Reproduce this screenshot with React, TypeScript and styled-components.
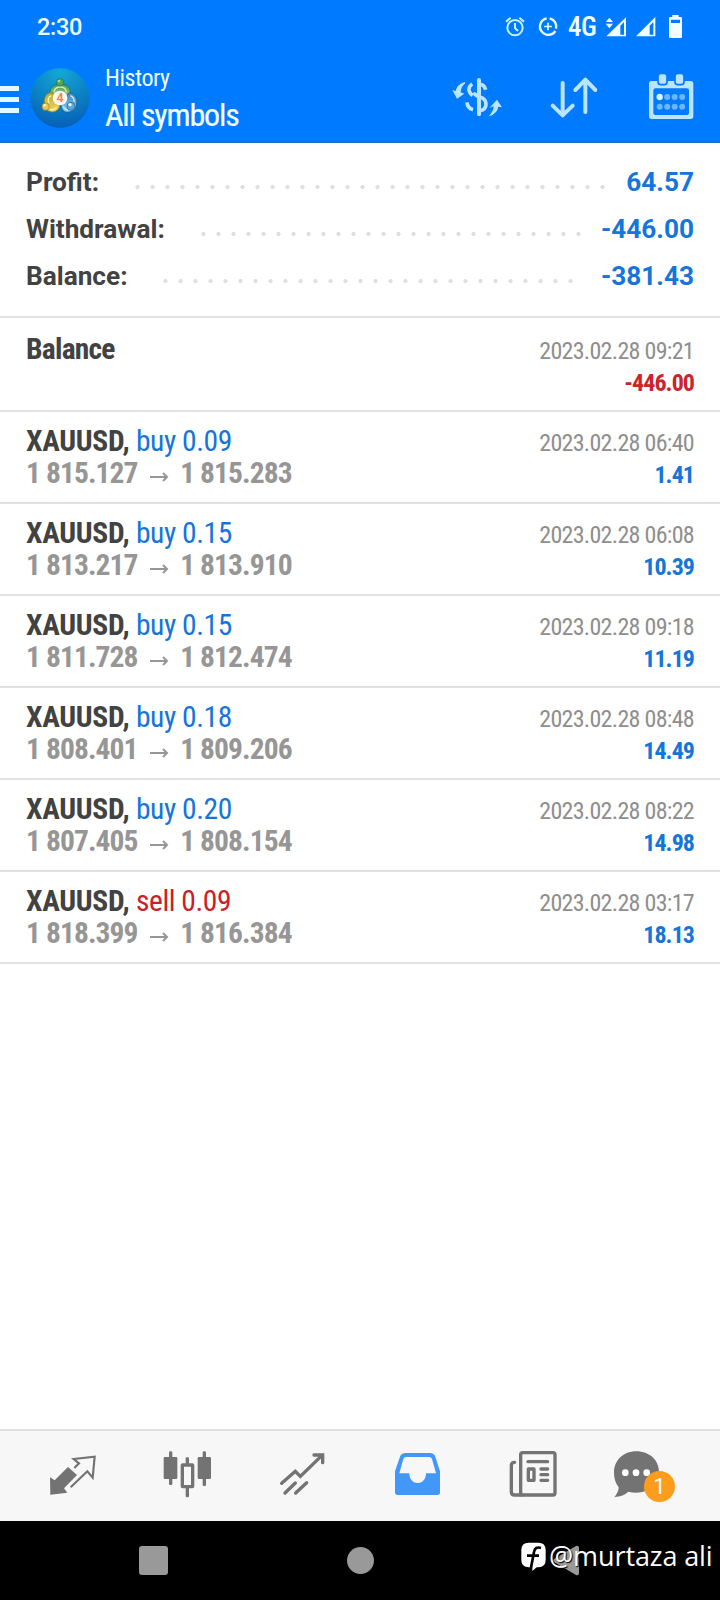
import React from 'react';
import styled, { createGlobalStyle } from 'styled-components';

const GlobalStyle = createGlobalStyle`
  * { box-sizing: border-box; }
  body { margin: 0; background: #fff; font-family: Roboto, "Liberation Sans", sans-serif; }
`;

const Screen = styled.div`
  display: flex;
  flex-direction: column;
  width: 720px;
  height: 1600px;
  overflow: hidden;
  background: #fff;
`;

const Header = styled.header`
  height: 143px;
  background: #007aff;
  border-bottom: 1px solid #1a6cc4;
  color: #f2ffff;
`;

const StatusBar = styled.div`
  display: flex;
  align-items: center;
  height: 54px;
  padding: 0 37px;
`;

const Clock = styled.span`
  flex: 1;
  font-size: 23.5px;
  font-weight: 500;
  line-height: 54px;
  letter-spacing: -0.3px;
`;

const StatusIcon = styled.svg<{ $w: number; $gap: number }>`
  width: ${p => p.$w}px;
  height: 26px;
  margin-left: ${p => p.$gap}px;
`;

const Network = styled.span`
  width: 27px;
  margin-left: 9px;
  margin-right: 1px;
  font-size: 27px;
  font-weight: 500;
  font-stretch: 75%;
  line-height: 54px;
  letter-spacing: -0.5px;
  white-space: nowrap;
`;

const Toolbar = styled.div`
  display: flex;
  height: 88px;
  padding-right: 24px;
`;

const MenuButton = styled.div`
  display: flex;
  flex-direction: column;
  gap: 6.5px;
  width: 19px;
  margin: 32px 11px 0 0;
`;

const MenuBar = styled.span`
  height: 4.6px;
  background: #e0fbff;
`;

const Logo = styled.svg`
  width: 60px;
  height: 60px;
  margin-top: 14px;
`;

const Titles = styled.div`
  flex: 1;
  padding: 9px 0 0 15px;
  font-stretch: 75%;
`;

const Subtitle = styled.div`
  font-size: 24px;
  line-height: 30px;
  letter-spacing: -0.45px;
`;

const Title = styled.div`
  margin-top: 2px;
  font-size: 32px;
  line-height: 40px;
  letter-spacing: -1.15px;
  -webkit-text-stroke: 0.2px currentColor;
`;

const Actions = styled.div`
  display: flex;
  gap: 47px;
  padding-top: 18px;
`;

const Glyph = styled.svg`
  width: 50px;
  height: 50px;
  display: block;
`;

const Summary = styled.section`
  height: 175px;
  padding: 15px 26px 0;
  border-bottom: 2px solid #e1e1e1;
`;

const SummaryRow = styled.div`
  display: flex;
  align-items: center;
  justify-content: flex-end;
  height: 47px;
  font-size: 26.2px;
  font-weight: 700;
  color: #424242;
`;

const SummaryLabel = styled.span`
  flex: 1;
`;

const Leader = styled.span<{ $dots: number }>`
  width: ${p => p.$dots * 15}px;
  height: 6px;
  margin-top: 10px;
  background: radial-gradient(circle at 7.5px 3px, #dfdfdf 1.7px, transparent 2.5px) 0 0 / 15px 6px repeat-x;
`;

const SummaryValue = styled.span<{ $gap: number }>`
  margin-left: ${p => p.$gap}px;
  color: #1475da;
  text-align: right;
`;

const Row = styled.div<{ $tall?: boolean }>`
  display: flex;
  justify-content: space-between;
  height: ${p => (p.$tall ? 94 : 92)}px;
  padding: ${p => (p.$tall ? 15 : 13)}px 26px 0;
  border-bottom: 2px solid #e1e1e1;
  font-stretch: 75%;
  line-height: 32px;
  white-space: nowrap;
`;

const Deal = styled.div`
  font-size: 29.5px;
`;

const Symbol = styled.div<{ $tight?: boolean }>`
  font-weight: 700;
  color: #424242;
  letter-spacing: ${p => (p.$tight ? -0.75 : -0.3)}px;
`;

const Side = styled.span<{ $sell?: boolean }>`
  font-weight: 400;
  letter-spacing: -0.45px;
  color: ${p => (p.$sell ? '#cb2027' : '#1475da')};
`;

const Prices = styled.div`
  display: flex;
  align-items: center;
  font-weight: 700;
  letter-spacing: -0.9px;
  color: #969696;
`;

const Arrow = styled.svg`
  width: 20px;
  height: 12px;
  margin: 8px 11.5px 0 11px;
`;

const Result = styled.div`
  padding-top: 2px;
  font-size: 24px;
  text-align: right;
`;

const Time = styled.div`
  color: #8e8e8e;
  letter-spacing: -0.7px;
`;

const Amount = styled.div<{ $loss?: boolean }>`
  font-weight: 700;
  letter-spacing: -0.95px;
  color: ${p => (p.$loss ? '#c9252b' : '#1475da')};
`;

const Blank = styled.div`
  flex: 1;
`;

const TabBar = styled.nav`
  display: flex;
  gap: 65px;
  height: 92px;
  padding: 19px 0 0 48px;
  background: #f7f7f7;
  border-top: 2px solid #e1e1e1;
`;

const Messages = styled.div`
  position: relative;
  width: 50px;
  height: 50px;
  margin-left: -13px;
`;

const Badge = styled.span`
  position: absolute;
  left: 34px;
  top: 21px;
  width: 31px;
  height: 31px;
  border-radius: 50%;
  background: #fe9d1c;
  color: #fff;
  font-size: 22px;
  line-height: 32px;
  text-align: center;
`;

const SystemBar = styled.footer`
  position: relative;
  display: flex;
  align-items: center;
  height: 79px;
  padding-left: 139px;
  background: #000;
`;

const Recents = styled.span`
  width: 29px;
  height: 29px;
  border-radius: 3px;
  background: #999;
`;

const Home = styled.span`
  width: 27px;
  height: 27px;
  margin-left: 179px;
  border-radius: 50%;
  background: #999;
`;

const Back = styled.svg`
  width: 27px;
  height: 31px;
  margin-left: 178px;
`;

const Watermark = styled.div`
  position: absolute;
  left: 521px;
  top: 19px;
  display: flex;
  align-items: center;
  color: #fff;
  font-family: "Open Sans", sans-serif;
  font-size: 27px;
  line-height: 32px;
  letter-spacing: -0.1px;
  white-space: nowrap;
  text-shadow: 1px 1px 1px #000;
`;

const WatermarkLogo = styled.svg`
  width: 26px;
  height: 30px;
  margin: 2px 2px 0 0;
`;

const summary = [
  { label: 'Profit:', value: '64.57', dots: 32, gap: 16 },
  { label: 'Withdrawal:', value: '-446.00', dots: 26, gap: 15 },
  { label: 'Balance:', value: '-381.43', dots: 28, gap: 23 },
];

const deals = [
  { side: 'buy 0.09', open: '1 815.127', close: '1 815.283', time: '2023.02.28 06:40', profit: '1.41' },
  { side: 'buy 0.15', open: '1 813.217', close: '1 813.910', time: '2023.02.28 06:08', profit: '10.39' },
  { side: 'buy 0.15', open: '1 811.728', close: '1 812.474', time: '2023.02.28 09:18', profit: '11.19' },
  { side: 'buy 0.18', open: '1 808.401', close: '1 809.206', time: '2023.02.28 08:48', profit: '14.49' },
  { side: 'buy 0.20', open: '1 807.405', close: '1 808.154', time: '2023.02.28 08:22', profit: '14.98' },
  { side: 'sell 0.09', open: '1 818.399', close: '1 816.384', time: '2023.02.28 03:17', profit: '18.13' },
];

const StatusIcons = () => (
  <>
    <StatusIcon $w={22} $gap={0} viewBox="192 42 66 78" fill="none" stroke="#c9f0ff" strokeWidth="6">
      <circle cx="225" cy="83" r="23" />
      <path d="M225 69V84L234 93M198 65L212 53M252 65L238 53" />
    </StatusIcon>
    <StatusIcon $w={22} $gap={11} viewBox="291 42 66 78" fill="none" stroke="#e8fcff" strokeWidth="7">
      <path d="M320 55A25 25 0 1 0 346 93M329 55A25 25 0 0 1 348 86" />
      <path d="M324 68V91M312.500 79.500H335.500" strokeWidth="5" />
    </StatusIcon>
    <Network>4G</Network>
    <StatusIcon $w={23} $gap={8} viewBox="492 42 69 78" fill="#f2ffff">
      <path d="M508 53L519 66H497ZM508 85L497 71H519Z" />
      <path fillRule="evenodd" d="M558 52V109H499ZM552 66L541 77V104H552Z" />
    </StatusIcon>
    <StatusIcon $w={21} $gap={8} viewBox="585 42 63 78" fill="#f2ffff">
      <path fillRule="evenodd" d="M646 51V109H588ZM640 66L629 77V104H640Z" />
    </StatusIcon>
    <StatusIcon $w={15} $gap={12} viewBox="684 42 45 78" fill="#f2ffff">
      <path fillRule="evenodd" d="M697 45H716V51H723Q726 51 726 54V111Q726 114 723 114H690Q687 114 687 111V54Q687 51 690 51H697ZM693 59V69H720V59Z" />
    </StatusIcon>
  </>
);

const AppLogo = () => (
  <Logo viewBox="90 203 180 180">
    <defs>
      <radialGradient id="disc" cx="50%" cy="5%" r="95%">
        <stop offset="0" stopColor="#14a8d6" />
        <stop offset=".5" stopColor="#0b86c6" />
        <stop offset="1" stopColor="#0760b8" />
      </radialGradient>
      <linearGradient id="green" x1="0" y1="0" x2="0" y2="1">
        <stop offset="0" stopColor="#3f9a55" /><stop offset="1" stopColor="#a8d08a" />
      </linearGradient>
      <linearGradient id="gold" x1="0" y1="0" x2="0" y2="1">
        <stop offset="0" stopColor="#b5a93c" /><stop offset="1" stopColor="#f5d75a" />
      </linearGradient>
      <linearGradient id="sky" x1="0" y1="0" x2="0" y2="1">
        <stop offset="0" stopColor="#3b86c0" /><stop offset="1" stopColor="#8fd0f2" />
      </linearGradient>
    </defs>
    <circle cx="180" cy="293" r="89" fill="url(#disc)" />
    <path d="M150 285C148 262 160 250 181 250S214 262 211 287L198 294 166 292Z" fill="url(#green)" stroke="#226f5a" strokeWidth="2.500" />
    <path d="M162 276C163 264 170 260 181 260S198 264 199 276" fill="none" stroke="#d3e9b0" strokeWidth="4" />
    <path d="M134 312C129 291 141 274 157 277L180 312C179 328 167 336 155 335Q144 334 139 326Z" fill="url(#gold)" stroke="#77803a" strokeWidth="2.500" />
    <path d="M147 309Q140 291 154 286M150 328Q162 330 170 320" fill="none" stroke="#fff1a8" strokeWidth="4" />
    <path d="M182 311L207 277C224 276 233 293 230 311 228 331 211 337 196 335Q184 330 182 311Z" fill="url(#sky)" stroke="#1c5f94" strokeWidth="2.500" />
    <path d="M211 286Q224 292 222 305M190 318Q194 329 204 329" fill="none" stroke="#c9eaff" strokeWidth="4" />
    <circle cx="180" cy="246" r="11" fill="#55a854" stroke="#226f5a" strokeWidth="2" />
    <circle cx="177" cy="242" r="4" fill="#a6d890" />
    <circle cx="137" cy="319" r="11" fill="#e6c64e" stroke="#8a8438" strokeWidth="2" />
    <circle cx="134" cy="315" r="4" fill="#fff2b4" />
    <circle cx="213" cy="318" r="12" fill="#5ba9dc" stroke="#225f90" strokeWidth="2" />
    <circle cx="210" cy="313" r="5" fill="#e4f6ff" />
    <circle cx="180" cy="293" r="22" fill="#fbf6ee" />
    <text x="180" y="306" textAnchor="middle" fontSize="37" fontWeight="600" fill="#ee8455">4</text>
  </Logo>
);

const HeaderActions = () => (
  <Actions>
    <Glyph viewBox="36 216 150 150" fill="none" stroke="#bbe4ff" strokeWidth="11" strokeLinecap="round">
      <path d="M117 240V343" strokeWidth="12" />
      <path d="M97 252Q86 258 87 270 89 281 98 286" strokeLinecap="butt" />
      <path d="M120 253Q133 254 137 269M119 291Q138 296 138 313 138 329 119 333M81 307Q82 324 99 329" strokeLinecap="butt" />
      <path d="M104 282L112 288" />
      <path d="M74 246Q50 254 47 273L37 270 51 296 73 281 62 277Q63 259 76 250ZM147 348Q161 333 161 319L149 323 171 299 186 322 175 320Q172 340 149 348Z" fill="#bbe4ff" stroke="none" />
    </Glyph>
    <Glyph viewBox="327 216 150 150" fill="none" stroke="#bbe4ff" strokeWidth="12" strokeLinecap="round" strokeLinejoin="round">
      <path d="M368 249V345M338 317L368 346 398 317M436 336V239M406 270L436 239 466 270" />
    </Glyph>
    <Glyph viewBox="618 216 150 150" fill="#bbe4ff">
      <path fillRule="evenodd" d="M634 243H752Q760 243 760 251V349Q760 357 752 357H635Q627 357 627 349V251Q627 243 634 243ZM646 265Q640 265 640 271V339Q640 345 646 345H741Q747 345 747 339V271Q747 265 741 265Z" />
      <g stroke="#007aff" strokeWidth="5">
        <rect x="654" y="220" width="27" height="34" rx="9" />
        <rect x="705" y="220" width="27" height="34" rx="9" />
      </g>
      <g fill="#69b7ff">
        {[0, 1, 2, 3].map(i => <circle key={i} cx={659 + i * 22.500} cy="320" r="9" />)}
        {[1, 2, 3].map(i => <circle key={i} cx={659 + i * 22.500} cy="291" r="9" />)}
      </g>
      <circle cx="659" cy="291" r="9.500" fill="#d5f4ff" />
    </Glyph>
  </Actions>
);

const Tabs = () => (
  <TabBar>
    <Glyph viewBox="144 90 150 150" fill="#737373">
      <path d="M150 172L164 181 204 141 231 165 192 205 202 218 151 224Z" />
      <path d="M212 202L262 154 278 173 284 110 221 117 237 130 223 144" fill="none" stroke="#737373" strokeWidth="6.500" />
    </Glyph>
    <Glyph viewBox="489 90 150 150" fill="#737373">
      <rect x="507" y="94" width="10" height="101" rx="4" />
      <rect x="491" y="111" width="41" height="66" rx="4" />
      <rect x="608" y="94" width="10" height="104" rx="4" />
      <rect x="593" y="111" width="40" height="66" rx="4" />
      <rect x="557" y="112" width="10" height="20" rx="3" />
      <rect x="557" y="200" width="10" height="32" rx="4" />
      <rect x="547" y="135" width="31" height="65" rx="1" fill="none" stroke="#737373" strokeWidth="10" />
    </Glyph>
    <Glyph viewBox="834 90 150 150" fill="none" stroke="#737373" strokeWidth="10" strokeLinecap="round">
      <path d="M845 190L886 154 901 169 966 106M942 105H968V128" />
      <path d="M855 219L886 189M887 219L920 188" />
    </Glyph>
    <Glyph viewBox="99 90 150 150" fill="#4297fb">
      <path fillRule="evenodd" d="M135 99H211Q221 99 225 107L240 154V217Q240 225 232 225H113Q105 225 105 217V154L121 107Q125 99 135 99ZM138 111Q132 111 130 117L118 160H148C148 199 198 199 198 160H228L216 117Q214 111 208 111Z" />
    </Glyph>
    <Glyph viewBox="444 90 150 150" fill="none" stroke="#737373" strokeWidth="10" strokeLinecap="round">
      <rect x="482" y="98" width="103" height="127" rx="6" />
      <path d="M464 127Q454 127 454 136V215Q454 225 464 225H485M504 125H563M543 147H563M543 164H563M543 181H563" />
      <rect x="505" y="147" width="17" height="34" strokeLinejoin="round" />
    </Glyph>
    <Messages>
      <Glyph viewBox="750 90 150 150" fill="#737373">
        <path d="M829 94C868 94 897 120 897 156S868 218 829 218Q816 218 805 215 791 229 763 231 776 217 776 202 762 183 762 158C762 121 790 94 829 94Z" />
        <g fill="#fff"><circle cx="796" cy="158" r="10" /><circle cx="828" cy="158" r="10" /><circle cx="860" cy="158" r="10" /></g>
      </Glyph>
      <Badge>1</Badge>
    </Messages>
  </TabBar>
);

export default function App() {
  return (
    <Screen>
      <GlobalStyle />
      <Header>
        <StatusBar>
          <Clock>2:30</Clock>
          <StatusIcons />
        </StatusBar>
        <Toolbar>
          <MenuButton><MenuBar /><MenuBar /><MenuBar /></MenuButton>
          <AppLogo />
          <Titles>
            <Subtitle>History</Subtitle>
            <Title>All symbols</Title>
          </Titles>
          <HeaderActions />
        </Toolbar>
      </Header>
      <Summary>
        {summary.map(s => (
          <SummaryRow key={s.label}>
            <SummaryLabel>{s.label}</SummaryLabel>
            <Leader $dots={s.dots} />
            <SummaryValue $gap={s.gap}>{s.value}</SummaryValue>
          </SummaryRow>
        ))}
      </Summary>
      <Row $tall>
        <Deal><Symbol $tight>Balance</Symbol></Deal>
        <Result>
          <Time>2023.02.28 09:21</Time>
          <Amount $loss>-446.00</Amount>
        </Result>
      </Row>
      {deals.map(d => (
        <Row key={d.open}>
          <Deal>
            <Symbol>XAUUSD, <Side $sell={d.side.startsWith('sell')}>{d.side}</Side></Symbol>
            <Prices>
              {d.open}
              <Arrow viewBox="0 0 20 12" fill="none" stroke="#969696" strokeWidth="2"><path d="M1 6H18M14 2L18 6 14 10" /></Arrow>
              {d.close}
            </Prices>
          </Deal>
          <Result>
            <Time>{d.time}</Time>
            <Amount>{d.profit}</Amount>
          </Result>
        </Row>
      ))}
      <Blank />
      <Tabs />
      <SystemBar>
        <Recents />
        <Home />
        <Back viewBox="0 0 27 31" fill="#999"><path d="M24 1Q27 0 27 3V28Q27 31 24 30L2 17Q0 15.500 2 14Z" /></Back>
        <Watermark>
          <WatermarkLogo viewBox="484 370 78 90">
            <path d="M507 372H536Q558 372 558 394V424Q558 446 536 446H531L518 457V446H507Q485 446 485 424V394Q485 372 507 372Z" fill="#fff" />
            <path d="M544 388Q526 382 523 400L514 447M502 411H538" fill="none" stroke="#000" strokeWidth="8" />
          </WatermarkLogo>
          @murtaza ali
        </Watermark>
      </SystemBar>
    </Screen>
  );
}
